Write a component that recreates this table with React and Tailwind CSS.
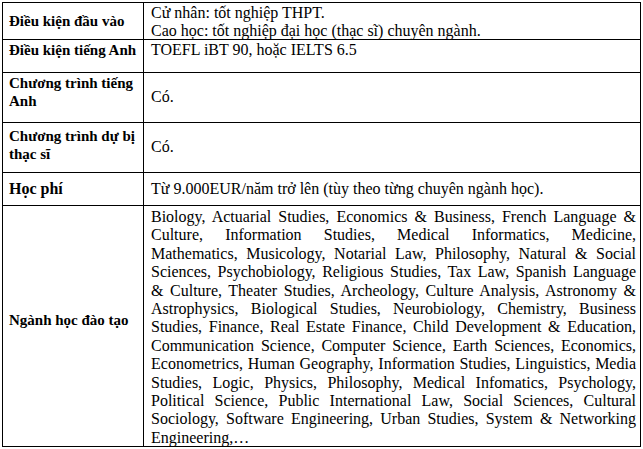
import React from "react";

const lines = [
  "Biology, Actuarial Studies, Economics & Business, French Language &",
  "Culture, Information Studies, Medical Informatics, Medicine,",
  "Mathematics, Musicology, Notarial Law, Philosophy, Natural & Social",
  "Sciences, Psychobiology, Religious Studies, Tax Law, Spanish Language",
  "& Culture, Theater Studies, Archeology, Culture Analysis, Astronomy &",
  "Astrophysics, Biological Studies, Neurobiology, Chemistry, Business",
  "Studies, Finance, Real Estate Finance, Child Development & Education,",
  "Communication Science, Computer Science, Earth Sciences, Economics,",
  "Econometrics, Human Geography, Information Studies, Linguistics, Media",
  "Studies, Logic, Physics, Philosophy, Medical Infomatics, Psychology,",
  "Political Science, Public International Law, Social Sciences, Cultural",
  "Sociology, Software Engineering, Urban Studies, System & Networking",
];

const label = "border-r border-b border-black pl-[6px] font-bold text-[15px] whitespace-nowrap";
const cell = "border-r border-b border-black pl-[7px]";

export default function App() {
  return (
    <div className="w-[643px] h-[449px] bg-white pl-[2px] pt-[2px] text-black text-[16px] leading-[18.4px] [font-family:'Liberation_Serif','Times_New_Roman',serif]">
      <div className="grid w-[639px] grid-cols-[141px_497px] border-l border-t border-black">
        {/* Row 1 */}
        <div className={`h-[37px] flex items-center ${label}`}>Điều kiện đầu vào</div>
        <div className={`h-[37px] pt-[1px] ${cell}`}>
          <div>Cử nhân: tốt nghiệp THPT.</div>
          <div>Cao học: tốt nghiệp đại học (thạc sĩ) chuyên ngành.</div>
        </div>
        {/* Row 2 */}
        <div className={`h-[33px] pt-[1px] ${label}`}>Điều kiện tiếng Anh</div>
        <div className={`h-[33px] pt-[1px] ${cell}`}>TOEFL iBT 90, hoặc IELTS 6.5</div>
        {/* Row 3 */}
        <div className={`h-[50px] pt-[1px] ${label}`}>
          <div>Chương trình tiếng</div>
          <div>Anh</div>
        </div>
        <div className={`h-[50px] flex items-center ${cell}`}>Có.</div>
        {/* Row 4 */}
        <div className={`h-[50px] pt-[4px] ${label}`}>
          <div>Chương trình dự bị</div>
          <div>thạc sĩ</div>
        </div>
        <div className={`h-[50px] flex items-center ${cell}`}>Có.</div>
        {/* Row 5 */}
        <div className={`h-[33px] flex items-center ${label} text-[16px]`}>Học phí</div>
        <div className={`h-[33px] flex items-center ${cell}`}>
          Từ 9.000EUR/năm trở lên (tùy theo từng chuyên ngành học).
        </div>
        {/* Row 6 */}
        <div className={`h-[241px] pb-[12px] flex items-center ${label}`}>Ngành học đào tạo</div>
        <div className={`h-[241px] pr-[4px] pt-[2px] ${cell}`}>
          {lines.map((l, i) => (
            <div key={i} className="text-justify [text-align-last:justify] whitespace-nowrap">
              {l}
            </div>
          ))}
          <div>Engineering,…</div>
        </div>
      </div>
    </div>
  );
}
